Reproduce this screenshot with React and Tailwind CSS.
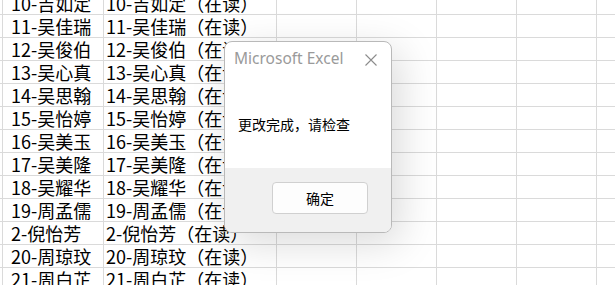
import React from "react";

const rows = [
  ["10-吉如定", "10-吉如定（在读）"],
  ["11-吴佳瑞", "11-吴佳瑞（在读）"],
  ["12-吴俊伯", "12-吴俊伯（在读）"],
  ["13-吴心真", "13-吴心真（在读）"],
  ["14-吴思翰", "14-吴思翰（在读）"],
  ["15-吴怡婷", "15-吴怡婷（在读）"],
  ["16-吴美玉", "16-吴美玉（在读）"],
  ["17-吴美隆", "17-吴美隆（在读）"],
  ["18-吴耀华", "18-吴耀华（在读）"],
  ["19-周孟儒", "19-周孟儒（在读）"],
  ["2-倪怡芳", "2-倪怡芳（在读）"],
  ["20-周琼玟", "20-周琼玟（在读）"],
  ["21-周白芷", "21-周白芷（在读）"],
];

function Row({ b, c }) {
  return (
    <div className="flex h-[23px] border-b border-[#dadada] text-[18px] leading-[22px] text-black">
      <div className="w-[3px] shrink-0 border-r border-[#dadada]" />
      <div className="w-[101px] shrink-0 border-r border-[#dadada] pl-2 whitespace-nowrap overflow-hidden">{b}</div>
      <div className="w-[173px] shrink-0 border-r border-[#dadada] pl-[2px] whitespace-nowrap overflow-hidden">{c}</div>
      <div className="w-[80px] shrink-0 border-r border-[#dadada]" />
      <div className="w-[80px] shrink-0 border-r border-[#dadada]" />
      <div className="w-[80px] shrink-0 border-r border-[#dadada]" />
      <div className="w-[80px] shrink-0 border-r border-[#dadada]" />
      <div className="flex-1" />
    </div>
  );
}

export default function App() {
  return (
    <div
      className="relative w-[615px] h-[285px] overflow-hidden bg-white"
      style={{ fontFamily: '"Noto Sans CJK SC", "Noto Sans", sans-serif' }}
    >
      <div className="-mt-[8px]">
        {rows.map((r, i) => (
          <Row key={i} b={r[0]} c={r[1]} />
        ))}
      </div>

      <div className="absolute left-[224px] top-[41px] w-[168px] h-[192px] flex flex-col rounded-[8px] border border-[#b9b9b9] bg-white overflow-hidden shadow-[8px_10px_40px_rgba(0,0,0,0.15)]">
        <div className="h-[34px] flex items-center justify-between pl-[9px] pr-[14px] shrink-0">
          <span
            className="text-[15.5px] text-[#9a9a9a] leading-none"
            style={{ fontFamily: '"Noto Sans", sans-serif' }}
          >
            Microsoft Excel
          </span>
          <svg width="12" height="12" viewBox="0 0 12 12" className="mt-[1px]">
            <path d="M0.5 0.5 L11.5 11.5 M11.5 0.5 L0.5 11.5" stroke="#8c8c8c" strokeWidth="1.1" fill="none" />
          </svg>
        </div>
        <div className="h-[92px] shrink-0 pt-[38px] pl-[13px] text-[14px] leading-[20px] text-black">
          更改完成，请检查
        </div>
        <div className="flex-1 bg-[#f0f0f0] pt-[14px] pl-[47px]">
          <div className="w-[96px] h-[32px] flex items-center justify-center rounded-[4px] border border-[#d0d0d0] bg-[#fdfdfd] text-[14px] text-black">
            确定
          </div>
        </div>
      </div>
    </div>
  );
}
